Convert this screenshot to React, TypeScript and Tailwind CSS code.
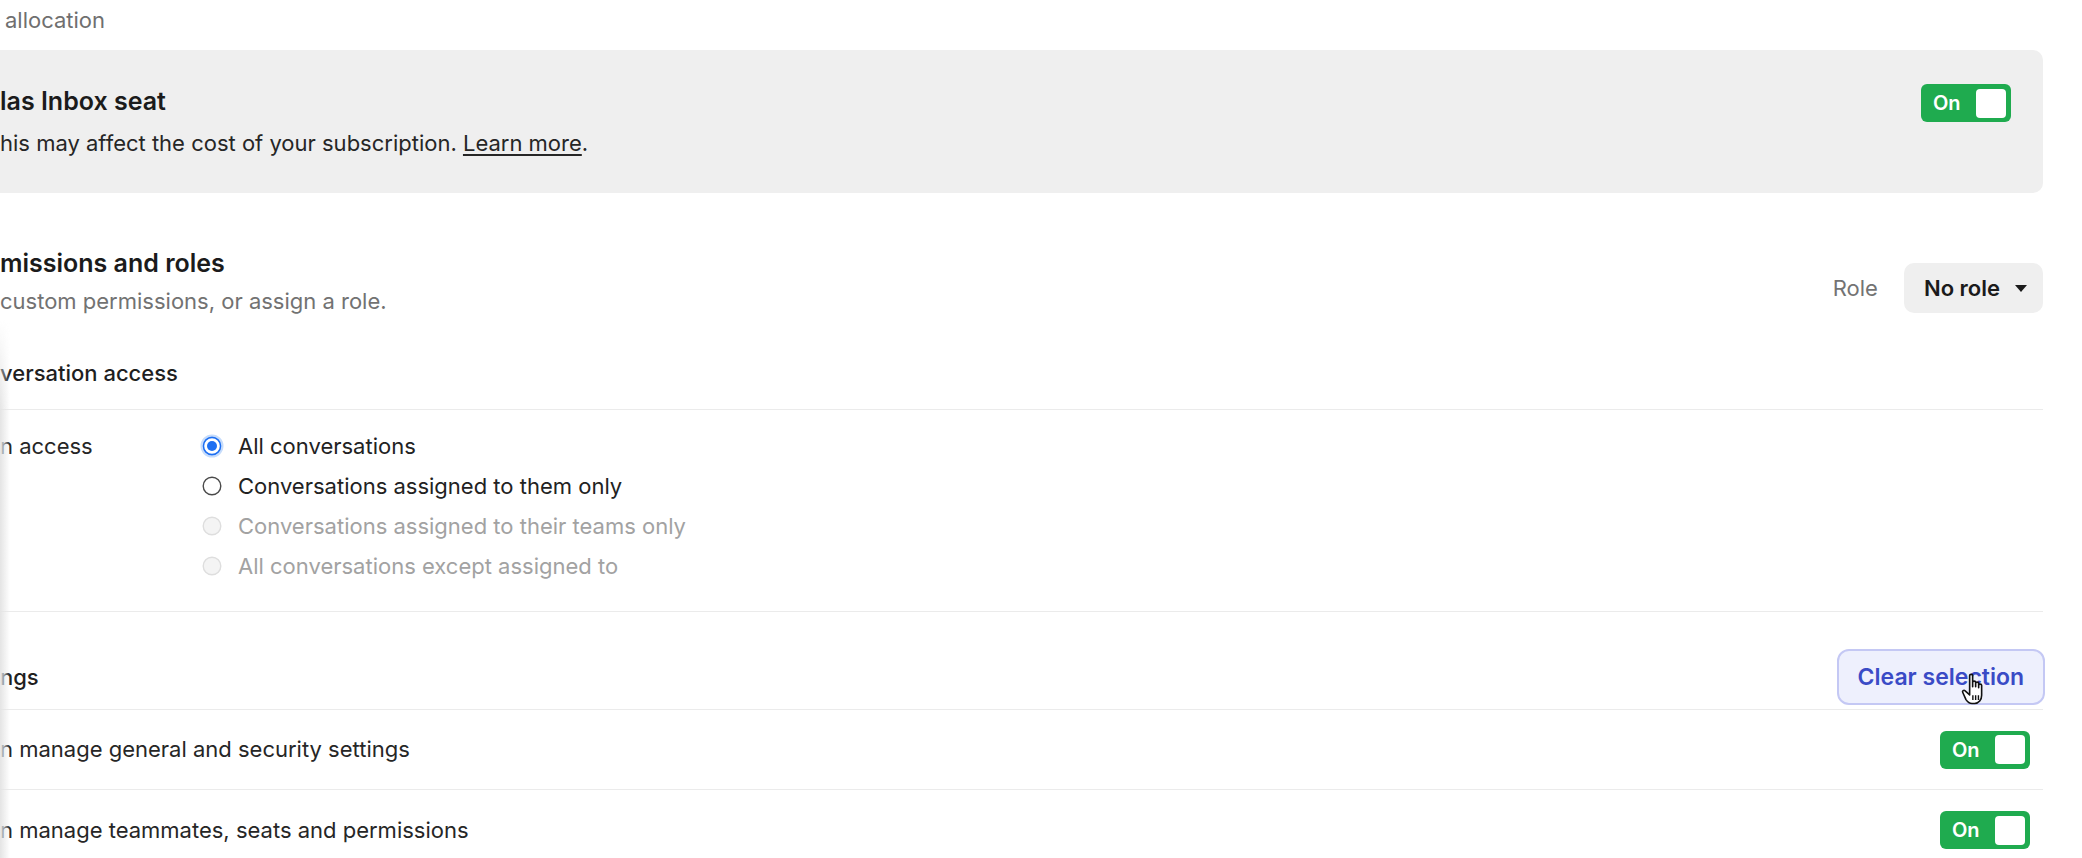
import React from "react";

function Toggle() {
  return (
    <div className="flex h-[38px] w-[90px] items-center justify-between rounded-[6px] bg-[#1fab4f] pl-[12px] pr-[5px]">
      <span className="text-[20px] font-semibold leading-none text-white">On</span>
      <span className="h-[29px] w-[30px] rounded-[4px] bg-white" />
    </div>
  );
}

function Radio({ state }: { state: "on" | "off" | "disabled" }) {
  if (state === "on") {
    return (
      <svg width="24" height="24" viewBox="0 0 24 24">
        <circle cx="12" cy="12" r="10.5" fill="none" stroke="#c6dcfb" strokeWidth="2" />
        <circle cx="12" cy="12" r="8.6" fill="#ffffff" stroke="#1d6ff2" strokeWidth="1.6" />
        <circle cx="12" cy="12" r="5" fill="#1d6ff2" />
      </svg>
    );
  }
  if (state === "off") {
    return (
      <svg width="24" height="24" viewBox="0 0 24 24">
        <circle cx="12" cy="12" r="8.8" fill="#ffffff" stroke="#4a4a4a" strokeWidth="1.4" />
      </svg>
    );
  }
  return (
    <svg width="24" height="24" viewBox="0 0 24 24">
      <circle cx="12" cy="12" r="8.8" fill="#f4f4f4" stroke="#dedede" strokeWidth="1.4" />
    </svg>
  );
}

function HandCursor() {
  return (
    <svg width="30" height="40" viewBox="0 0 28 36" className="absolute left-[121px] top-[20px]">
      <path
        d="M9 3.5c0-1.4 2.8-1.4 2.8 0V14l0-4.2c0-1.4 2.8-1.4 2.8 0V14l0-3.2c0-1.4 2.8-1.4 2.8 0V15l0-2.4c0-1.4 2.8-1.4 2.8 0v9.4c0 4.2-2.6 7.6-6.6 7.6h-2.4c-2.6 0-4.2-1.4-5.6-3.6L2.6 19.4c-.8-1.4.9-2.8 2.2-1.6L9 21.6Z"
        fill="#ffffff"
        stroke="#111111"
        strokeWidth="1.5"
        strokeLinejoin="round"
      />
      <path d="M12 22v4.5M14.6 22v4.5M17.2 22v4.5" stroke="#111111" strokeWidth="1.3" />
    </svg>
  );
}

export default function App() {
  return (
    <div className="relative h-[858px] w-[2082px] overflow-hidden bg-white font-['Inter',sans-serif] text-[#1f1f1f] antialiased">
      <div className="pr-[39px]">
        {/* top label */}
        <div className="h-[50px] pl-[5px] pt-[5px] text-[22px] leading-[30px] text-[#6f6f6f]">allocation</div>

        {/* Inbox seat panel */}
        <div className="flex h-[143px] items-start justify-between rounded-r-[10px] bg-[#efefef] pr-[32px]">
          <div className="pt-[36px]">
            <div className="text-[25px] font-semibold leading-[30px] text-[#1b1b1b]">las Inbox seat</div>
            <div className="mt-[12px] text-[22px] leading-[30px] text-[#262626]">
              his may affect the cost of your subscription. <span className="underline underline-offset-[3px]">Learn more</span>.
            </div>
          </div>
          <div className="pt-[34px]">
            <Toggle />
          </div>
        </div>

        {/* Permissions and roles */}
        <div className="mt-[55px] flex items-start justify-between">
          <div>
            <div className="text-[25px] font-semibold leading-[30px] text-[#1b1b1b]">missions and roles</div>
            <div className="mt-[8px] text-[22px] leading-[30px] text-[#727272]">custom permissions, or assign a role.</div>
          </div>
          <div className="mt-[15px] flex items-center gap-[26px]">
            <span className="text-[22px] text-[#737373]">Role</span>
            <div className="flex h-[50px] items-center gap-[14px] rounded-[10px] bg-[#efefef] pl-[20px] pr-[15px]">
              <span className="text-[22px] font-semibold text-[#1b1b1b]">No role</span>
              <svg width="14" height="9" viewBox="0 0 14 9">
                <path d="M1 1h12L7 8Z" fill="#1b1b1b" />
              </svg>
            </div>
          </div>
        </div>

        {/* Conversation access header */}
        <div className="mt-[42px] border-b border-[#ebebeb] pb-[21px] text-[22px] font-medium leading-[30px] text-[#1f1f1f]">
          versation access
        </div>

        {/* Radios */}
        <div className="flex border-b border-[#ebebeb] pb-[25px] pt-[16px]">
          <div className="w-[200px] pt-[5px] text-[22px] leading-[30px] text-[#262626]">n access</div>
          <div className="flex flex-col">
            <div className="flex h-[40px] items-center gap-[14px]">
              <Radio state="on" />
              <span className="text-[22px] text-[#222222]">All conversations</span>
            </div>
            <div className="flex h-[40px] items-center gap-[14px]">
              <Radio state="off" />
              <span className="text-[22px] text-[#222222]">Conversations assigned to them only</span>
            </div>
            <div className="flex h-[40px] items-center gap-[14px]">
              <Radio state="disabled" />
              <span className="text-[22px] text-[#a2a2a2]">Conversations assigned to their teams only</span>
            </div>
            <div className="flex h-[40px] items-center gap-[14px]">
              <Radio state="disabled" />
              <span className="text-[22px] text-[#a2a2a2]">All conversations except assigned to</span>
            </div>
          </div>
        </div>

        {/* Settings header */}
        <div className="flex items-center justify-between border-b border-[#ebebeb] pb-[4px] pt-[37px]">
          <span className="text-[22px] font-medium text-[#1f1f1f]">ngs</span>
          <div className="relative -mr-[2px] flex h-[56px] items-center rounded-[12px] border-2 border-[#c4c8f4] bg-[#eef0fd] px-[19px]">
            <span className="text-[23px] font-semibold text-[#3a4bc6]">Clear selection</span>
            <HandCursor />
          </div>
        </div>

        {/* Setting rows */}
        <div className="flex h-[80px] items-center justify-between border-b border-[#ebebeb] pr-[13px]">
          <span className="text-[22px] text-[#262626]">n manage general and security settings</span>
          <Toggle />
        </div>
        <div className="flex h-[80px] items-center justify-between pr-[13px]">
          <span className="text-[22px] text-[#262626]">n manage teammates, seats and permissions</span>
          <Toggle />
        </div>
      </div>

      {/* left edge shadow overlay */}
      <div className="pointer-events-none absolute bottom-0 left-0 top-[320px] w-[10px] bg-gradient-to-r from-[#e4e4e4] to-transparent [mask-image:linear-gradient(to_bottom,transparent,black_90px)]" />
    </div>
  );
}
